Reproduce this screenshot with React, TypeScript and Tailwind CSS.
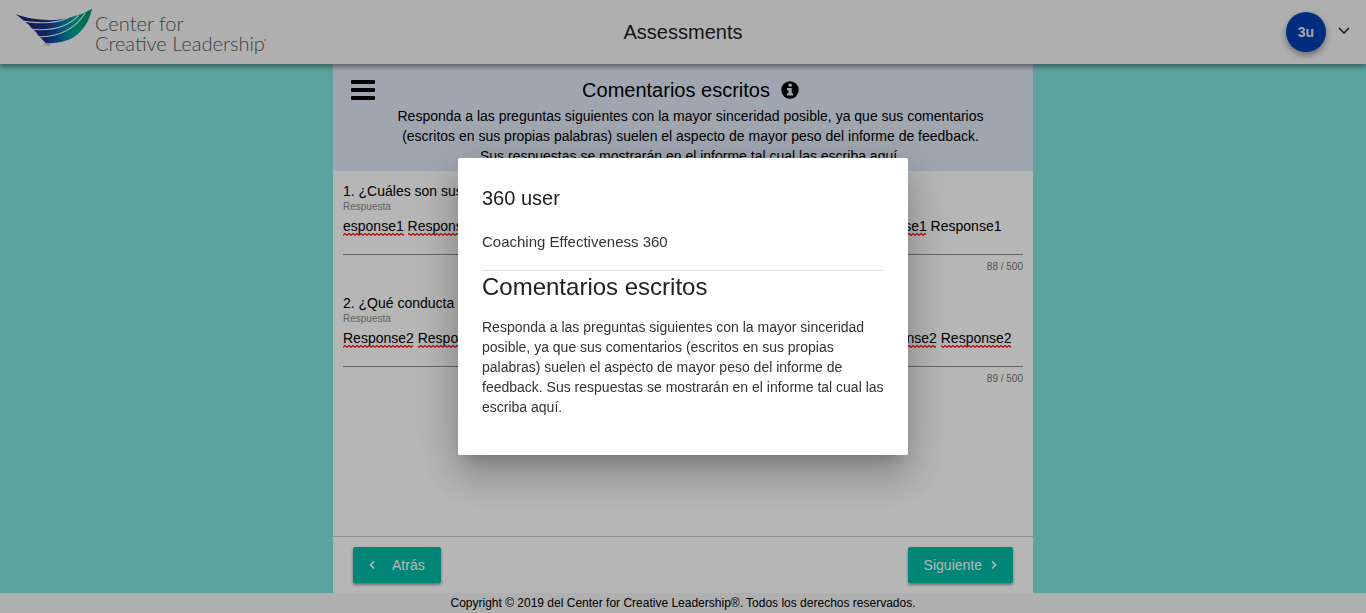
import React from "react";

type Question = {
  id: string;
  label: string;
  value: string;
  count: string;
  // [start, width] of every word flagged by the spell checker
  marks: [number, number][];
};

const WORD = 70;
const PITCH = 75;

const questions: Question[] = [
  {
    id: "q1",
    label: "1. ¿Cuáles son sus",
    value:
      "esponse1 Response1 Response1 Response1 Response1 Response1 Response1 Response1 Response1",
    count: "88 / 500",
    marks: [
      [0, 61],
      ...[0, 1, 2, 3, 4, 5, 6].map((i): [number, number] => [65 + i * PITCH - (i > 3 ? 2 : 0), WORD]),
    ],
  },
  {
    id: "q2",
    label: "2. ¿Qué conducta",
    value:
      "Response2 Response2 Response2 Response2 Response2 Response2 Response2 Response2 Response2",
    count: "89 / 500",
    marks: [0, 1, 2, 3, 4, 5, 6, 7, 8].map((i): [number, number] => [
      i * PITCH - (i > 4 ? 2 : 0),
      WORD,
    ]),
  },
];

function Logo() {
  return (
    <a href="#" aria-label="Center for Creative Leadership" className="flex items-center pl-4">
      <svg width="252" height="48" viewBox="0 0 252 48" aria-hidden="true">
        <defs>
          <linearGradient id="wing" gradientUnits="userSpaceOnUse" x1="40" y1="60" x2="225" y2="50">
            <stop offset="0" stopColor="#20206e" />
            <stop offset="0.35" stopColor="#1a3088" />
            <stop offset="0.55" stopColor="#0b5ea8" />
            <stop offset="0.72" stopColor="#0093a0" />
            <stop offset="0.88" stopColor="#00a58a" />
            <stop offset="1" stopColor="#009673" />
          </linearGradient>
        </defs>
        <g transform="translate(-6 -4) scale(0.3333)">
          <path
            d="M18 31C50 43 90 49 122 48C150 47 168 43 188 38C212 32 230 24 246 14C240 45 222 78 192 99C168 114 135 119 107 117L84 93L78 84L66 74L58 64L46 54Z"
            fill="url(#wing)"
          />
          <g fill="none" stroke="#f5f5f5" strokeWidth="3.200">
            <path d="M42 52C90 60 145 58 178 40" />
            <path d="M58 75C115 82 170 72 206 34" />
            <path d="M76 98C135 101 190 82 226 26" />
          </g>
        </g>
        <text x="28" y="38" fontSize="4" fill="#777" fontFamily="Liberation Sans, sans-serif">
          TM
        </text>
        <g fill="#54595c" fontFamily="Lato, sans-serif" fontWeight="300" fontSize="20">
          <text x="79" y="23">Center for</text>
          <text x="79" y="43">Creative Leadership</text>
        </g>
        <circle cx="249" cy="32" r="1" fill="#999" />
      </svg>
    </a>
  );
}

function SpellingMarks({ id, marks }: { id: string; marks: [number, number][] }) {
  return (
    <svg
      className="pointer-events-none absolute bottom-0 left-0 h-[3px] w-full"
      aria-hidden="true"
    >
      <defs>
        <pattern id={id} width="4" height="3" patternUnits="userSpaceOnUse">
          <path d="M-1 3L2 0.600L5 3" fill="none" stroke="#f00000" strokeWidth="1.200" />
        </pattern>
      </defs>
      {marks.map(([x, w]) => (
        <rect key={x} x={x} y="0" width={w} height="3" fill={`url(#${id})`} />
      ))}
    </svg>
  );
}

function QuestionField({ q }: { q: Question }) {
  return (
    <div className="h-28">
      <p className="truncate text-sm leading-5">{q.label}</p>
      <label htmlFor={q.id} className="block text-[10px] leading-[11px] text-[#8a8a8a]">
        Respuesta
      </label>
      <div className="relative mt-1">
        <textarea
          id={q.id}
          rows={1}
          defaultValue={q.value}
          spellCheck={false}
          className="block h-5 w-full resize-none overflow-hidden bg-transparent text-sm leading-5 outline-none"
        />
        <SpellingMarks id={`${q.id}-wave`} marks={q.marks} />
      </div>
      <div className="mt-[18px] border-t border-[#8c8c8c] pt-1 text-right text-[10px] leading-4 text-[#757575]">
        {q.count}
      </div>
    </div>
  );
}

export default function App() {
  return (
    <div className="flex min-h-screen flex-col bg-[#80e5db] font-['Liberation_Sans',Arial,sans-serif] text-black">
      <header className="relative flex h-16 shrink-0 items-center bg-[#f5f5f5] shadow-[0_3px_5px_rgba(0,0,0,0.4)]">
        <div className="flex min-w-0 flex-1 basis-0">
          <Logo />
        </div>
        <h1 className="text-xl text-[#212121]">Assessments</h1>
        <div className="flex min-w-0 flex-1 basis-0 justify-end">
          <div className="flex items-center gap-3 pr-4">
            <span className="flex size-10 items-center justify-center rounded-full bg-[#003fb4] text-sm font-bold text-[#e8e8e8] shadow-[0_3px_6px_rgba(0,0,0,0.4)]">
              3u
            </span>
            <button type="button" aria-label="Menú de usuario" className="block">
              <svg width="12" height="12" viewBox="0 0 12 12" aria-hidden="true">
                <path d="M1 2L6 7L11 2" fill="none" stroke="#222" strokeWidth="1.5" />
              </svg>
            </button>
          </div>
        </div>
      </header>

      <main className="mx-auto flex w-full max-w-[700px] flex-1 flex-col bg-white">
        <section className="flex items-start bg-[#dfe9f7] pb-[5px] pl-[18px] pt-3">
          <button type="button" aria-label="Abrir menú" className="mt-1 shrink-0">
            <svg width="24" height="20" viewBox="0 0 24 20" aria-hidden="true">
              <rect width="24" height="4" rx="1" />
              <rect y="8" width="24" height="4" rx="1" />
              <rect y="16" width="24" height="4" rx="1" />
            </svg>
          </button>
          <div className="flex-1 pl-[18px] pr-[45px] text-center">
            <h2 className="flex items-center justify-center gap-[11px] text-xl leading-7">
              Comentarios escritos
              <svg width="18" height="18" viewBox="0 0 18 18" aria-hidden="true">
                <circle cx="9" cy="9" r="8.700" />
                <path
                  d="M7.500 2.800H10.800V5.600H7.500ZM6 7H10.800V12.300H12V14.600H6V12.300H7.400V9.300H6Z"
                  fill="#dfe9f7"
                />
              </svg>
            </h2>
            <p className="mt-[2px] text-sm leading-5">
              Responda a las preguntas siguientes con la mayor sinceridad posible, ya que sus
              comentarios (escritos en sus propias palabras) suelen el aspecto de mayor peso del
              informe de feedback. Sus respuestas se mostrarán en el informe tal cual las escriba
              aquí.
            </p>
          </div>
        </section>

        <form className="flex flex-1 flex-col">
          <div className="flex-1 px-[10px] pt-[10px]">
            {questions.map((q) => (
              <QuestionField key={q.id} q={q} />
            ))}
          </div>
          <div className="flex justify-between border-t border-[#c8c8c8] px-5 py-[10px]">
            <button
              type="button"
              className="flex h-9 items-center gap-4 rounded-[2px] bg-[#00bba7] px-4 text-sm font-medium text-white shadow-[0_2px_3px_rgba(0,0,0,0.4)]"
            >
              <svg width="7" height="10" viewBox="0 0 7 10" aria-hidden="true">
                <path d="M5 1.500L1.500 5L5 8.500" fill="none" stroke="currentColor" strokeWidth="1.700" />
              </svg>
              Atrás
            </button>
            <button
              type="button"
              className="flex h-9 items-center gap-2 rounded-[2px] bg-[#00bba7] px-4 text-sm font-medium text-white shadow-[0_2px_3px_rgba(0,0,0,0.4)]"
            >
              Siguiente
              <svg width="7" height="10" viewBox="0 0 7 10" aria-hidden="true">
                <path d="M2 1.500L5.500 5L2 8.500" fill="none" stroke="currentColor" strokeWidth="1.700" />
              </svg>
            </button>
          </div>
        </form>
      </main>

      <footer className="bg-[#f5f5f5] text-center text-xs leading-5">
        Copyright © 2019 del Center for Creative Leadership®. Todos los derechos reservados.
      </footer>

      <div className="fixed inset-0 flex items-center justify-center bg-black/[0.288]">
        <div
          role="dialog"
          aria-modal="true"
          aria-labelledby="dialog-title"
          className="w-full max-w-[450px] rounded-[2px] bg-white p-6 text-[#212121] shadow-[0_11px_15px_-7px_rgba(0,0,0,0.2),0_24px_38px_3px_rgba(0,0,0,0.14),0_9px_46px_8px_rgba(0,0,0,0.12)]"
        >
          <h2 id="dialog-title" className="text-xl leading-8">
            360 user
          </h2>
          <p className="mt-[18px] text-[15px] leading-5 text-[#333]">Coaching Effectiveness 360</p>
          <hr className="mt-[18px] border-[#e0e0e0]" />
          <h3 className="text-2xl leading-8">Comentarios escritos</h3>
          <p className="mb-[14px] mt-[14px] text-sm leading-5 text-[#333]">
            Responda a las preguntas siguientes con la mayor sinceridad posible, ya que sus
            comentarios (escritos en sus propias palabras) suelen el aspecto de mayor peso del
            informe de feedback. Sus respuestas se mostrarán en el informe tal cual las escriba
            aquí.
          </p>
        </div>
      </div>
    </div>
  );
}
